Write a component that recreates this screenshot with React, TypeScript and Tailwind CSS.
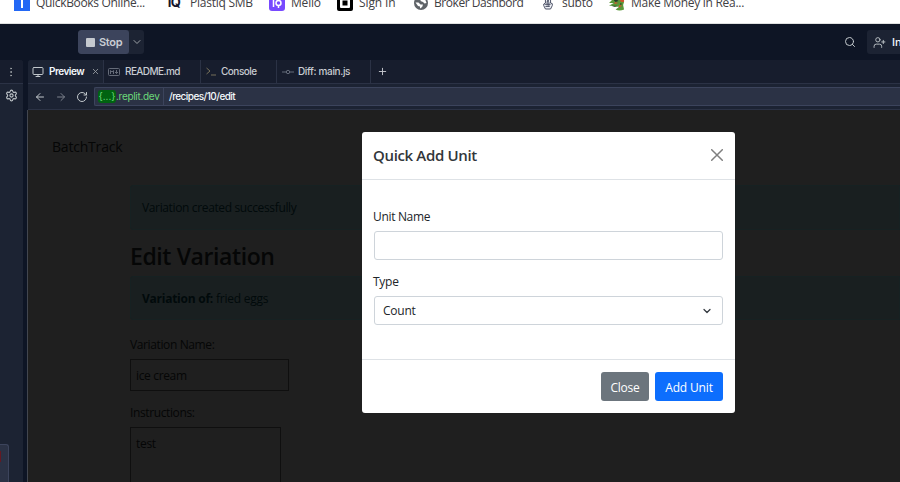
import { ReactNode } from "react";
import { Settings, ArrowLeft, ArrowRight, RotateCw, Monitor, Search, UserPlus, ChevronDown, X, Plus, MoreVertical } from "lucide-react";

function Bookmark({ icon, label, className }: { icon: ReactNode; label: string; className: string }) {
  return (
    <div className={"flex h-[24px] shrink-0 items-center whitespace-nowrap " + className}>
      <span className="flex w-[16px] shrink-0 justify-center">{icon}</span>
      <span>{label}</span>
    </div>
  );
}

function Bookmarks() {
  return (
    <div className="h-[24px] overflow-hidden border-b border-[#dfe1e0] bg-white">
      <div className="-mt-[9px] flex pl-[14px] font-['Open_Sans',sans-serif] text-[12px] text-[#3f4043]">
        <Bookmark
          className="w-[152px] gap-[6px] tracking-[-0.33px]"
          label="QuickBooks Online..."
          icon={
            <svg width="16" height="16" viewBox="0 0 16 16">
              <path fill="#2368f5" d="M0 0h16v16H0z" />
              <path fill="#fff" d="M7 0h2v13H7z" />
            </svg>
          }
        />
        <Bookmark
          className="w-[103px] gap-[8px] tracking-[-0.25px]"
          label="Plastiq SMB"
          icon={<span className="font-[Inter,sans-serif] text-[13px] font-bold tracking-[-0.5px] text-[#14162c]">IQ</span>}
        />
        <Bookmark
          className="w-[68px] gap-[6px] tracking-[-0.2px]"
          label="Melio"
          icon={
            <svg width="16" height="16" viewBox="0 0 16 16" fill="none" stroke="#fff" strokeWidth="1.5">
              <rect width="16" height="16" rx="3" fill="#7849ff" stroke="none" />
              <path d="M4.500 5v7M9.500 10v3" />
              <circle cx="9.500" cy="8" r="2.500" />
            </svg>
          }
        />
        <Bookmark
          className="w-[76px] gap-[6px] tracking-[-0.1px]"
          label="Sign In"
          icon={
            <svg width="16" height="16" viewBox="0 0 16 16">
              <rect width="16" height="16" rx="2" fill="#000" />
              <rect x="3" y="3" width="10" height="10" rx="1" fill="#fff" />
              <rect x="5.500" y="5.500" width="5" height="5" fill="#000" />
            </svg>
          }
        />
        <Bookmark
          className="w-[127px] gap-[5px] tracking-[-0.45px]"
          label="Broker Dashbord"
          icon={
            <svg width="14" height="14" viewBox="0 0 14 14">
              <circle cx="7" cy="7" r="7" fill="#5f6368" />
              <path fill="#fff" d="M1.500 6.500h3L6.500 8.500H9Q9 11 6 12.500V10.500L4 10zM7 2l4 1 1.500 4-2 .5L9 6 6.500 5z" />
            </svg>
          }
        />
        <Bookmark
          className="w-[69px] gap-[6px] tracking-[-0.25px]"
          label="subto"
          icon={
            <svg width="12" height="16" viewBox="0 0 14 16" fill="#eef0f6" stroke="#454b60" strokeWidth="1.1">
              <path d="M4 8V2q1-2 2 0l1 5 1-5q2-2 2 0v6q3 0 2 3l-2 4H4l-2-4q-1-2 2-3z" />
              <path d="M6 6v5M3 9.500h7M8 7v5M4 12h5" />
            </svg>
          }
        />
        <Bookmark
          className="gap-[6px] tracking-[-0.28px]"
          label="Make Money in Rea..."
          icon={
            <svg width="17" height="16" viewBox="0 0 17 16">
              <path fill="#5a9839" d="M0 8l5-5 9-1 2 5-1 3 1 5q-5 2-9 0l4-3-4 0-4-1-3 0 5-3z" />
              <path fill="#cf532e" d="M9 2l3-1 4 3v3l-3 0zM6 7l4 1-4 1zM11 10l3 1-4 2z" />
              <path fill="#253b28" d="M5 5l3-1 2 2-3 1zM2 11l7 0-3 1zM12 8l2 1-2 1z" />
            </svg>
          }
        />
      </div>
    </div>
  );
}

function TopBar() {
  return (
    <div className="flex h-[36px] items-center bg-[#0e1525] pl-[78px]">
      <div className="flex h-[24px] overflow-hidden rounded-[3px] bg-[#1c2333]">
        <div className="flex w-[51px] items-center rounded-[3px] bg-[#3c445c] pl-[8px]">
          <span className="h-[9px] w-[9px] rounded-[1px] bg-[#c5c9cf]" />
          <span className="ml-[4px] text-[11px] font-semibold tracking-[-0.3px] text-[#c9cdd4]">Stop</span>
        </div>
        <div className="flex w-[15px] items-center justify-center">
          <ChevronDown size={12} strokeWidth={2} className="shrink-0 text-[#9da2a6]" />
        </div>
      </div>
      <Search size={12} strokeWidth={2} className="ml-auto text-[#c2c8cc]" />
      <div className="ml-[11px] flex h-[24px] w-[33px] items-center overflow-hidden rounded-l-[3px] bg-[#1c2333] pl-[6px]">
        <UserPlus size={13} strokeWidth={1.7} className="shrink-0 text-[#c2c8cc]" />
        <span className="ml-[6px] whitespace-nowrap text-[11px] font-medium text-[#f5f9fc]">In</span>
      </div>
    </div>
  );
}

function Tab({ icon, label, className, children }: { icon: ReactNode; label: string; className: string; children?: ReactNode }) {
  return (
    <div className={"flex h-full shrink-0 items-center whitespace-nowrap border-r border-[#2b3245] text-[10px] " + className}>
      {icon}
      {label}
      {children}
    </div>
  );
}

function Tabs() {
  return (
    <div className="flex h-[24px] shrink-0 overflow-hidden rounded-tl-[3px] border-b border-[#2b3245] bg-[#171d2d] text-[#c8ccd1]">
      <Tab
        className="w-[76px] gap-[5px] bg-[#1c2333] pl-[4px] font-semibold tracking-[-0.5px] text-[#f5f9fc]"
        label="Preview"
        icon={<Monitor size={12} strokeWidth={2} className="shrink-0 text-[#c2c8cc]" />}
      >
        <X size={9} strokeWidth={2.200} className="ml-[2px] shrink-0 text-[#9da2a6]" />
      </Tab>
      <Tab
        className="w-[97px] gap-[5px] pl-[4px] font-medium tracking-[-0.58px]"
        label="README.md"
        icon={
          <svg width="12" height="8" viewBox="0 0 12 8" fill="none" stroke="#656b78">
            <rect x=".5" y=".5" width="11" height="7" rx="1" />
            <path d="M2.500 6V2.500L4 4l1.500-1.500V6M8.500 2v3.500M7 4l1.500 1.500L10 4" />
          </svg>
        }
      />
      <Tab
        className="w-[76px] gap-[5px] pl-[5px] font-medium tracking-[-0.5px]"
        label="Console"
        icon={
          <svg width="10" height="9" viewBox="0 0 10 9" fill="none" stroke="#77705b">
            <path d="M.5 1l3.500 3L.5 7M5 8h5" />
          </svg>
        }
      />
      <Tab
        className="w-[94px] gap-[4px] pl-[5px] font-medium tracking-[-0.35px]"
        label="Diff: main.js"
        icon={
          <svg width="12" height="6" viewBox="0 0 12 6" fill="none" stroke="#656d7b">
            <path d="M0 3h4M8 3h4" />
            <circle cx="6" cy="3" r="1.700" />
          </svg>
        }
      />
      <div className="flex items-center pl-[6px]">
        <Plus size={11} strokeWidth={2} />
      </div>
    </div>
  );
}

function AddressBar() {
  return (
    <div className="flex h-[26px] shrink-0 items-center border-b border-[#2b3245] bg-[#1c2333] pl-[6px]">
      <ArrowLeft size={12} strokeWidth={2} className="shrink-0 text-[#c2c8cc]" />
      <ArrowRight size={12} strokeWidth={2} className="ml-[9px] shrink-0 text-[#7c828d]" />
      <RotateCw size={12} strokeWidth={2} className="ml-[9px] shrink-0 text-[#c2c8cc]" />
      <div className="ml-[6px] flex h-[19px] flex-1 items-center rounded-l-[2px] border border-r-0 border-[#3c445c] bg-[#2b3245] text-[10px]">
        <span className="ml-[3px] flex h-[13px] w-[18px] items-center justify-center rounded-[3px] bg-[#006311] text-[#6cd979]">{"{...}"}</span>
        <span className="w-[47px] whitespace-nowrap tracking-[-0.3px] text-[#6cd979]">.replit.dev</span>
        <span className="flex h-full items-center border-l border-[#3c445c] pl-[5px] font-medium tracking-[-0.55px] text-[#f5f9fc]">/recipes/10/edit</span>
      </div>
    </div>
  );
}

function RecipePage() {
  return (
    <div className="flex-1 overflow-hidden border-l border-[#42464f] bg-[#1f1f1f] font-['Open_Sans',sans-serif] text-[12px] text-[#050606]">
      <div className="h-[75px] pl-[24px] pt-[27px] text-[14px] leading-[20px] tracking-[-0.2px]">BatchTrack</div>
      <div className="ml-[102px]">
        <div className="flex h-[45px] items-center rounded-l-[3px] border border-[#162122] bg-[#191f20] pl-[11px] pt-px tracking-[-0.36px] text-[#010a0b]">
          Variation created successfully
        </div>
        <h1 className="mt-[10px] h-[36px] text-[23px] font-semibold leading-[33px] tracking-[-0.4px]">Edit Variation</h1>
        <div className="flex h-[44px] items-center rounded-l-[3px] border border-[#162122] bg-[#191f20] pl-[11px] pt-[2px] tracking-[-0.25px] text-[#010a0b]">
          <b className="mr-[3px]">Variation of:</b>fried eggs
        </div>
        <div className="mt-[16px] h-[23px] leading-[18px] tracking-[-0.38px]">Variation Name:</div>
        <div className="flex h-[32px] w-[159px] items-center border border-[#0f0f0f] pl-[5px] pt-[2px] tracking-[-0.35px]">ice cream</div>
        <div className="mt-[13px] h-[23px] leading-[18px] tracking-[-0.38px]">Instructions:</div>
        <div className="h-[80px] w-[151px] border border-[#0f0f0f] pl-[5px] pt-[7px] leading-[18px] tracking-[-0.3px]">test</div>
      </div>
    </div>
  );
}

function QuickAddModal() {
  return (
    <div className="absolute left-[362px] top-[132px] flex h-[281px] w-[373px] flex-col rounded-[3px] bg-white font-['Open_Sans',sans-serif] text-[12px] text-[#212529]">
      <div className="flex h-[48px] items-center justify-between border-b border-[#dee2e6] pl-[11px] pr-[12px]">
        <h2 className="text-[15px] font-semibold tracking-[-0.35px] text-[#32363a]">Quick Add Unit</h2>
        <svg className="-mt-px" width="12" height="12" viewBox="0 0 12 12" stroke="#7f7f7f" strokeWidth="1.500" strokeLinecap="round">
          <path d="M.7.7l10.600 10.600M11.300.7L.7 11.300" />
        </svg>
      </div>
      <div className="flex-1 pl-[12px] pr-[12px] pt-[28px]">
        <div className="-ml-px h-[23px] leading-[18px] tracking-[-0.33px]">Unit Name</div>
        <div className="h-[29px] rounded-[3px] border border-[#ced4da]" />
        <div className="-ml-px mt-[13px] h-[23px] leading-[18px] tracking-[-0.25px]">Type</div>
        <div className="flex h-[29px] items-center justify-between rounded-[3px] border border-[#ced4da] pl-[8px] pr-[9px] tracking-[-0.25px]">
          Count
          <ChevronDown size={12} strokeWidth={2.500} className="text-[#343a40]" />
        </div>
      </div>
      <div className="flex h-[54px] items-center justify-end gap-[6px] border-t border-[#dee2e6] pr-[12px] text-white">
        <button className="h-[29px] w-[48px] rounded-[3px] bg-[#6c757d] pt-[2px] tracking-[-0.25px]">Close</button>
        <button className="h-[29px] w-[68px] rounded-[3px] bg-[#0d6efd] pt-[2px] tracking-[-0.15px]">Add Unit</button>
      </div>
    </div>
  );
}

export default function App() {
  return (
    <div className="relative flex h-[482px] w-[900px] flex-col overflow-hidden bg-[#0e1525] font-[Inter,sans-serif]">
      <Bookmarks />
      <TopBar />
      <div className="flex min-h-0 flex-1">
        <aside className="relative flex w-[23px] shrink-0 flex-col items-center rounded-tr-[3px] bg-[#1c2333]">
          <div className="flex h-[24px] w-full items-center justify-center rounded-tr-[3px] border-b border-[#2b3245] bg-[#171d2d] pr-px">
            <MoreVertical size={12} className="text-[#9da2a6]" />
          </div>
          <Settings size={13} strokeWidth={2} className="mt-[5px] text-[#c2c8cc]" />
          <div className="absolute bottom-0 left-0 h-[38px] w-[9px] rounded-tr-[3px] border-r border-t border-[#3c445c] bg-[#2b3245] pt-[6px]">
            <div className="h-[11px] w-px bg-[#631923]" />
          </div>
        </aside>
        <main className="ml-[4px] flex min-w-0 flex-1 flex-col">
          <div className="ml-px"><Tabs /></div>
          <div className="ml-px"><AddressBar /></div>
          <RecipePage />
        </main>
      </div>
      <QuickAddModal />
    </div>
  );
}
